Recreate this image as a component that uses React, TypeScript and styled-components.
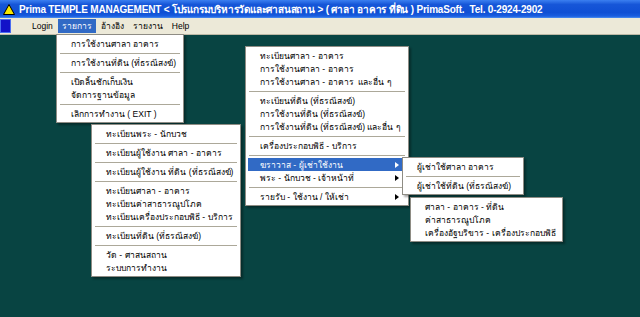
import React from "react";
import styled, { createGlobalStyle } from "styled-components";

const Global = createGlobalStyle`
  html, body { margin: 0; padding: 0; background: #084442; }
  body { font-family: Tahoma, "Liberation Sans", "Noto Sans", sans-serif; }
`;

const Screen = styled.div`
  position: relative;
  width: 640px;
  height: 317px;
  display: flex;
  flex-direction: column;
  overflow: hidden;
  background: #084442;
`;

const TitleBar = styled.div`
  height: 18px;
  display: flex;
  align-items: center;
  gap: 4px;
  padding-left: 3px;
  background: linear-gradient(#3b7ff0 0%, #1656d8 25%, #0f4fd4 70%, #1a5ee0 90%, #4d8ff0 100%);
  color: #fff;
  font-family: Tahoma, "Liberation Sans", sans-serif;
  font-weight: bold;
  font-size: 10px;
  white-space: pre;
`;

const TitleText = styled.span`
  letter-spacing: -0.2px;
`;

const MenuBar = styled.div`
  height: 16px;
  display: flex;
  align-items: center;
  background: #ece9d8;
  border-bottom: 1px solid #bdb9a6;
  font-size: 8.5px;
  color: #000;
`;

const AppIcon = styled.div`
  width: 11px;
  height: 14px;
  margin-right: 17px;
  background: #1212c8;
  border: 1px solid #4a6cf0;
  box-sizing: border-box;
`;

const BarItem = styled.div<{ $active?: boolean }>`
  height: 14px;
  display: flex;
  align-items: center;
  padding: 0 4px;
  margin-right: 1px;
  background: ${(p) => (p.$active ? "#316ac5" : "transparent")};
  color: ${(p) => (p.$active ? "#fff" : "#000")};
`;

const Desktop = styled.div`
  flex: 1;
  background: #084442;
`;

const Popup = styled.div<{ $x: number; $y: number; $w: number }>`
  position: absolute;
  left: ${(p) => p.$x}px;
  top: ${(p) => p.$y}px;
  width: ${(p) => p.$w}px;
  box-sizing: border-box;
  padding: 2px;
  background: #fff;
  border: 1px solid #8e8c84;
  box-shadow: 2px 2px 2px rgba(0, 0, 0, 0.35);
  display: flex;
  flex-direction: column;
  font-size: 8.5px;
  color: #000;
`;

const Item = styled.div<{ $active?: boolean }>`
  height: 13px;
  display: flex;
  align-items: center;
  justify-content: space-between;
  padding: 0 7px 0 12px;
  white-space: pre;
  background: ${(p) => (p.$active ? "#316ac5" : "transparent")};
  color: ${(p) => (p.$active ? "#fff" : "#000")};
`;

const Sep = styled.div`
  height: 6px;
  display: flex;
  align-items: center;
  &::before {
    content: "";
    flex: 1;
    margin: 0 1px;
    border-top: 1px solid #aca899;
  }
`;

const Arrow = styled.span<{ $active?: boolean }>`
  width: 0;
  height: 0;
  border-top: 3.5px solid transparent;
  border-bottom: 3.5px solid transparent;
  border-left: 4px solid ${(p) => (p.$active ? "#fff" : "#000")};
`;

type Entry = "-" | { label: string; arrow?: boolean; active?: boolean };

const m = (...xs: (string | Entry)[]): Entry[] =>
  xs.map((x) => (typeof x === "string" && x !== "-" ? { label: x } : (x as Entry)));

const menus: { x: number; y: number; w: number; items: Entry[] }[] = [
  {
    x: 56,
    y: 34,
    w: 128,
    items: m(
      "การใช้งานศาลา อาคาร",
      "-",
      "การใช้งานที่ดิน (ที่ธรณีสงฆ์)",
      "-",
      "เปิดลิ้นชักเก็บเงิน",
      "จัดการฐานข้อมูล",
      "-",
      "เลิกการทำงาน ( EXIT )"
    ),
  },
  {
    x: 91,
    y: 124,
    w: 150,
    items: m(
      "ทะเบียนพระ - นักบวช",
      "-",
      "ทะเบียนผู้ใช้งาน ศาลา - อาคาร",
      "-",
      "ทะเบียนผู้ใช้งาน ที่ดิน (ที่ธรณีสงฆ์)",
      "-",
      "ทะเบียนศาลา - อาคาร",
      "ทะเบียนค่าสาธารณูปโภค",
      "ทะเบียนเครื่องประกอบพิธี - บริการ",
      "-",
      "ทะเบียนที่ดิน (ที่ธรณีสงฆ์)",
      "-",
      "วัด - ศาสนสถาน",
      "ระบบการทำงาน"
    ),
  },
  {
    x: 245,
    y: 46,
    w: 164,
    items: m(
      "ทะเบียนศาลา - อาคาร",
      "การใช้งานศาลา - อาคาร",
      "การใช้งานศาลา - อาคาร  และอื่น ๆ",
      "-",
      "ทะเบียนที่ดิน (ที่ธรณีสงฆ์)",
      "การใช้งานที่ดิน (ที่ธรณีสงฆ์)",
      "การใช้งานที่ดิน (ที่ธรณีสงฆ์) และอื่น ๆ",
      "-",
      "เครื่องประกอบพิธี - บริการ",
      "-",
      { label: "ฆราวาส - ผู้เช่าใช้งาน", arrow: true, active: true },
      { label: "พระ - นักบวช - เจ้าหน้าที่", arrow: true },
      "-",
      { label: "รายรับ - ใช้งาน / ให้เช่า", arrow: true }
    ),
  },
  {
    x: 402,
    y: 157,
    w: 122,
    items: m("ผู้เช่าใช้ศาลา อาคาร", "-", "ผู้เช่าใช้ที่ดิน (ที่ธรณีสงฆ์)"),
  },
  {
    x: 410,
    y: 197,
    w: 153,
    items: m(
      "ศาลา - อาคาร - ที่ดิน",
      "ค่าสาธารณูปโภค",
      "เครื่องอัฐบริขาร - เครื่องประกอบพิธี"
    ),
  },
];

const WarnIcon = () => (
  <svg width="12" height="11" viewBox="0 0 12 11">
    <polygon points="6,0.5 11.5,10.5 0.5,10.5" fill="#f8e800" stroke="#000" strokeWidth="1" />
  </svg>
);

export default function App() {
  return (
    <Screen>
      <Global />
      <TitleBar>
        <WarnIcon />
        <TitleText>
          {"Prima TEMPLE MANAGEMENT < โปรแกรมบริหารวัดและศาสนสถาน > ( ศาลา อาคาร ที่ดิน ) PrimaSoft.  Tel. 0-2924-2902"}
        </TitleText>
      </TitleBar>
      <MenuBar>
        <AppIcon />
        <BarItem>Login</BarItem>
        <BarItem $active>รายการ</BarItem>
        <BarItem>อ้างอิง</BarItem>
        <BarItem>รายงาน</BarItem>
        <BarItem>Help</BarItem>
      </MenuBar>
      <Desktop />
      {menus.map((menu, i) => (
        <Popup key={i} $x={menu.x} $y={menu.y} $w={menu.w}>
          {menu.items.map((it, j) =>
            it === "-" ? (
              <Sep key={j} />
            ) : (
              <Item key={j} $active={it.active}>
                <span>{it.label}</span>
                {it.arrow && <Arrow $active={it.active} />}
              </Item>
            )
          )}
        </Popup>
      ))}
    </Screen>
  );
}
